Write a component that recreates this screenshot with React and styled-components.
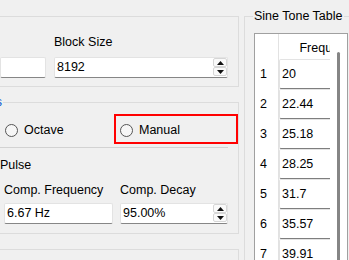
import React from "react";
import styled, { createGlobalStyle } from "styled-components";

const Global = createGlobalStyle`
  html, body { margin: 0; padding: 0; background: #f0f0f0; }
  body {
    font-family: "Liberation Sans", Arial, sans-serif;
    font-size: 12.5px;
    line-height: 15px;
    color: #000;
  }
  * { box-sizing: border-box; }
`;

const Screen = styled.div`
  width: 349px;
  height: 260px;
  overflow: hidden;
  display: flex;
  align-items: flex-start;
  gap: 5px;
`;

const LeftColumn = styled.div`
  width: 239px;
  flex: 0 0 239px;
  display: flex;
  flex-direction: column;
  gap: 15px;
  padding-top: 16px;
`;

const Group = styled.div`
  position: relative;
  border: 1px solid #dcdcdc;
  border-left: none;
  padding: ${(p) => p.$pad || "0"};
  min-height: ${(p) => p.$minH || "auto"};
`;

const EdgeTitle = styled.div`
  position: absolute;
  top: -8px;
  left: 0;
  width: 3px;
  display: flex;
  justify-content: flex-end;
  white-space: nowrap;
  color: #0a5bd0;
  span { background: #f0f0f0; padding-right: 1px; }
`;

const FieldGrid = styled.div`
  display: grid;
  grid-template-columns: ${(p) => p.$cols};
  column-gap: ${(p) => p.$gap}px;
  row-gap: ${(p) => p.$rowGap}px;
  padding-left: ${(p) => p.$indent || 0}px;
`;

const Label = styled.div`
  height: 15px;
  white-space: nowrap;
`;

const Field = styled.div`
  height: 21px;
  background: #fff;
  border: 1px solid #e3e3e3;
  border-bottom-color: #868686;
  border-radius: 2px;
  display: flex;
  align-items: center;
  padding-left: 2px;
  white-space: nowrap;
  overflow: hidden;
`;

const FieldText = styled.span`
  flex: 1;
`;

const SpinButtons = styled.div`
  align-self: flex-start;
  width: 14px;
  display: flex;
  flex-direction: column;
`;

const SpinBtn = styled.div`
  height: 9px;
  border: 1px solid #d6d6d6;
  border-radius: 2px;
  background: #fafafa;
  display: flex;
  align-items: center;
  justify-content: center;
`;

const RadioRow = styled.div`
  display: flex;
  height: 30px;
`;

const RadioItem = styled.div`
  flex: 0 0 ${(p) => p.$w}px;
  width: ${(p) => p.$w}px;
  display: flex;
  align-items: center;
  gap: 6px;
  padding-left: ${(p) => (p.$highlight ? 4 : 5)}px;
  padding-top: 2px;
  border: ${(p) => (p.$highlight ? "2px solid #ff0000" : "none")};
`;

const RadioCircle = styled.span`
  width: 13px;
  height: 13px;
  border-radius: 50%;
  border: 1px solid #555;
  background: #f6f6f6;
  flex: 0 0 13px;
`;

const Separator = styled.div`
  height: 1px;
  background: #d2d2d2;
  margin-top: 3px;
`;

const SectionLabel = styled.div`
  margin-top: 10px;
  height: 15px;
`;

const PulseBlock = styled.div`
  margin-top: 10px;
`;

const SineGroup = styled.div`
  position: relative;
  flex: 0 0 130px;
  margin-top: 16px;
  height: 300px;
  border: 1px solid #dcdcdc;
  padding: 16px 0 0 9px;
`;

const GroupTitle = styled.div`
  position: absolute;
  top: -8px;
  left: 8px;
  padding: 0 1px;
  background: #f0f0f0;
  white-space: nowrap;
`;

const TableFrame = styled.div`
  width: 94px;
  height: 260px;
  border: 1px solid #a0a0a0;
  background: #fff;
  display: flex;
`;

const Viewport = styled.div`
  flex: 1;
  overflow: hidden;
  display: grid;
  grid-template-columns: 24px 100px;
  grid-auto-rows: 30px;
  grid-template-rows: 25px;
  align-content: start;
`;

const Corner = styled.div`
  border-right: 1px solid #e2e2e2;
`;

const HeaderCell = styled.div`
  text-align: center;
  padding-top: 7px;
  white-space: nowrap;
`;

const RowHead = styled.div`
  border-right: 1px solid #e2e2e2;
  padding-left: 5px;
  display: flex;
  align-items: center;
`;

const CellEditor = styled.div`
  background: #fff;
  border: 1px solid #e3e3e3;
  border-bottom-color: #7e7e7e;
  border-radius: 2px;
  padding-left: 2px;
  display: flex;
  align-items: center;
`;

const ScrollTrack = styled.div`
  flex: 0 0 17px;
  display: flex;
  justify-content: center;
`;

const ScrollThumb = styled.div`
  width: 3px;
  height: 300px;
  margin-top: 18px;
  border-radius: 2px;
  background: #858585;
`;

const Arrow = ({ up }) => (
  <svg width="7" height="4" viewBox="0 0 7 4">
    <polygon points={up ? "0,4 7,4 3.5,0" : "0,0 7,0 3.5,4"} fill="#111" />
  </svg>
);

const Spin = () => (
  <SpinButtons>
    <SpinBtn><Arrow up /></SpinBtn>
    <SpinBtn><Arrow /></SpinBtn>
  </SpinButtons>
);

const rows = ["20", "22.44", "25.18", "28.25", "31.7", "35.57", "39.91", "44.79"];

export default function App() {
  return (
    <>
      <Global />
      <Screen>
        <LeftColumn>
          <Group $pad="18px 10px 8px 0">
            <FieldGrid $cols="46px 174px" $gap={8} $rowGap={7}>
              <Label />
              <Label>Block Size</Label>
              <Field />
              <Field>
                <FieldText>8192</FieldText>
                <Spin />
              </Field>
            </FieldGrid>
          </Group>

          <Group $pad="11px 10px 9px 0">
            <EdgeTitle><span>Frequencies</span></EdgeTitle>
            <RadioRow>
              <RadioItem $w={114}>
                <RadioCircle />
                <span>Octave</span>
              </RadioItem>
              <RadioItem $w={124} $highlight>
                <RadioCircle />
                <span>Manual</span>
              </RadioItem>
            </RadioRow>
            <Separator />
            <SectionLabel>Pulse</SectionLabel>
            <PulseBlock>
              <FieldGrid $cols="109px 108px" $gap={7} $rowGap={5} $indent={4}>
                <Label>Comp. Frequency</Label>
                <Label>Comp. Decay</Label>
                <Field>
                  <FieldText>6.67 Hz</FieldText>
                </Field>
                <Field>
                  <FieldText>95.00%</FieldText>
                  <Spin />
                </Field>
              </FieldGrid>
            </PulseBlock>
          </Group>

          <Group $minH="60px" />
        </LeftColumn>

        <SineGroup>
          <GroupTitle>Sine Tone Table</GroupTitle>
          <TableFrame>
            <Viewport>
              <Corner />
              <HeaderCell>Frequency</HeaderCell>
              {rows.map((v, i) => (
                <React.Fragment key={i}>
                  <RowHead>{i + 1}</RowHead>
                  <CellEditor>{v}</CellEditor>
                </React.Fragment>
              ))}
            </Viewport>
            <ScrollTrack>
              <ScrollThumb />
            </ScrollTrack>
          </TableFrame>
        </SineGroup>
      </Screen>
    </>
  );
}
